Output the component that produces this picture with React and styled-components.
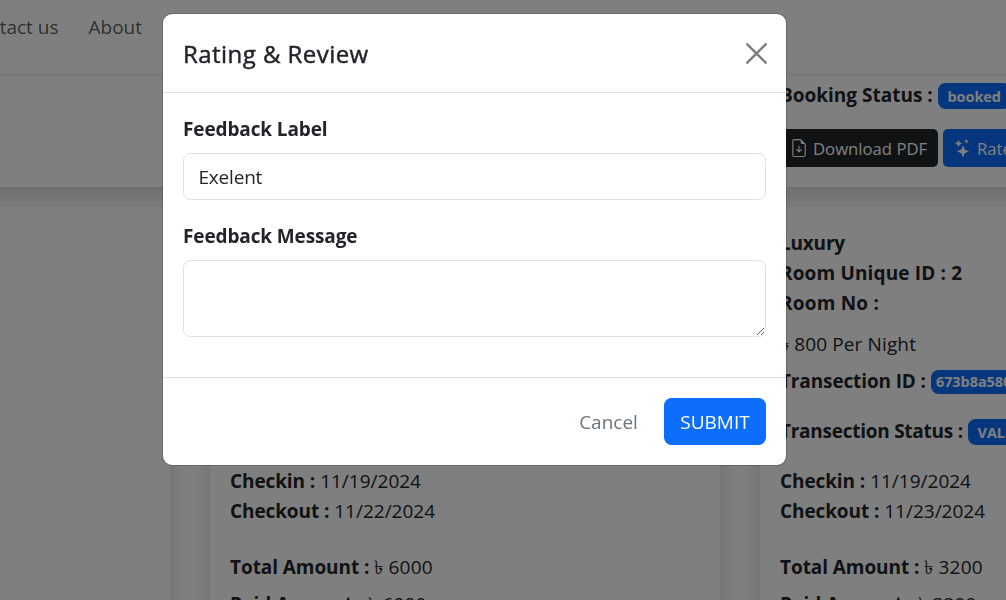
import React from 'react';
import styled, { createGlobalStyle } from 'styled-components';
import { BsStars, BsFileEarmarkArrowDown } from 'react-icons/bs';

const GlobalStyle = createGlobalStyle`
  *, *::before, *::after { box-sizing: border-box; }
  html, body, #root { height: 100%; }
  body {
    margin: 0;
    overflow: hidden;
    background: #fff;
    color: #212529;
    font-family: "Open Sans", "Noto Sans", sans-serif;
    font-size: 19px;
    line-height: 30px;
  }
`;

const Page = styled.div`
  height: 600px;
  overflow: hidden;
`;

const Navbar = styled.nav`
  position: relative;
  z-index: 1;
  height: 73px;
  margin: 0 -40px;
  padding: 12px 40px 0;
  background: #fff;
  box-shadow: 0 2.5px 5px rgba(0, 0, 0, 0.075);
`;

const NavLinks = styled.div`
  display: flex;
  justify-content: flex-end;
  gap: 30px;
  width: 142px;
  white-space: nowrap;
  color: rgba(0, 0, 0, 0.65);
`;

const NavLink = styled.span`
  flex: none;
`;

const Banner = styled.section`
  display: flex;
  flex-direction: column;
  gap: 19px;
  height: 114px;
  margin: 0 -40px;
  padding: 7px 0 0 820px;
  background: #fff;
  white-space: nowrap;
  box-shadow: 0 10px 20px rgba(0, 0, 0, 0.15);
`;

const Columns = styled.main`
  display: grid;
  grid-template-columns: repeat(3, 510px);
  gap: 40px;
  height: 500px;
  margin: 20px 0 0 -340px;
`;

const Card = styled.article`
  position: relative;
  padding: 21px 20px 0;
  background: #fff;
  white-space: nowrap;
  box-shadow: 0 10px 20px rgba(0, 0, 0, 0.15);
`;

const Line = styled.div`
  display: flex;
  align-items: center;
  height: 30px;
  margin-top: ${(p) => p.$top || 0}px;
`;

const Term = styled.span`
  margin-right: 5px;
  font-weight: 700;
  letter-spacing: ${(p) => p.$spacing || 0}px;
`;

const Value = styled.span`
  letter-spacing: ${(p) => p.$spacing || 0}px;
`;

const Badge = styled.span`
  height: ${(p) => (p.$tight ? 24 : 26)}px;
  margin-top: ${(p) => p.$top || 0}px;
  padding: 0 ${(p) => (p.$tight ? 5 : 9.75)}px;
  border-radius: 7.5px;
  background: #0d6efd;
  color: #fff;
  font-size: 14.4px;
  font-weight: 700;
  line-height: ${(p) => (p.$tight ? 24 : 27)}px;
`;

const SmallButtons = styled.div`
  display: flex;
  gap: 5px;
`;

const SmallButton = styled.button`
  display: flex;
  flex: none;
  align-items: center;
  gap: 5px;
  width: 158px;
  height: 38px;
  padding: 0 10px ${(p) => (p.$dark ? '0 10px' : '0 11px')};
  border: 0;
  border-radius: 5px;
  background: ${(p) => (p.$dark ? '#212529' : '#0d6efd')};
  color: #fff;
  font: 16.7px "Open Sans", sans-serif;
  white-space: nowrap;
  svg { flex: none; }
`;

const Backdrop = styled.div`
  position: fixed;
  inset: 0;
  z-index: 10;
  padding: 13px 0 0 162px;
  background: rgba(0, 0, 0, 0.5);
`;

const Dialog = styled.form`
  width: 625px;
  height: 453px;
  border: 1px solid rgba(0, 0, 0, 0.175);
  border-radius: 10px;
  background: #fff;
  background-clip: padding-box;
`;

const DialogHeader = styled.header`
  display: flex;
  align-items: center;
  justify-content: space-between;
  height: 79px;
  padding: 2px 16.5px 0 20px;
  border-bottom: 1px solid #dee2e6;
`;

const DialogTitle = styled.h5`
  margin: 0;
  font-size: 24px;
  font-weight: 400;
  letter-spacing: 0.45px;
  -webkit-text-stroke: 0.45px currentColor;
`;

const CloseButton = styled.button`
  display: flex;
  margin-top: -2px;
  padding: 3px;
  border: 0;
  background: none;
  color: #000;
  opacity: 0.5;
`;

const DialogBody = styled.div`
  display: flex;
  flex-direction: column;
  height: 284px;
  padding: 21px 20px 0;
`;

const Label = styled.label`
  height: 30px;
  margin: ${(p) => p.$top || 0}px 0 9px;
  font-weight: 700;
  letter-spacing: -0.12px;
`;

const Input = styled.input`
  width: 100%;
  height: 47px;
  padding: 1px 14.5px 0;
  border: 1px solid #dee2e6;
  border-radius: 7.5px;
  outline: 0;
  color: #212529;
  font: 19px "Open Sans", sans-serif;
  letter-spacing: -0.2px;
`;

const TextArea = styled.textarea`
  width: 100%;
  height: 77px;
  padding: 7.5px 15px;
  border: 1px solid #dee2e6;
  border-radius: 7.5px;
  outline: 0;
  resize: vertical;
  font: 19px/30px "Open Sans", sans-serif;
`;

const DialogFooter = styled.footer`
  display: flex;
  justify-content: flex-end;
  gap: 10px;
  padding: 20px 20px 0;
  border-top: 1px solid #dee2e6;
`;

const Button = styled.button`
  width: ${(p) => (p.$primary ? 102 : 91)}px;
  height: 47px;
  padding: 1px 0 0;
  border: 0;
  border-radius: 7.5px;
  background: ${(p) => (p.$primary ? '#0d6efd' : 'transparent')};
  color: ${(p) => (p.$primary ? '#fff' : '#6c757d')};
  font: 19px "Open Sans", sans-serif;
`;

function Stay({ top, checkout, amount }) {
  return (
    <>
      <Line $top={top}><Term $spacing={-0.1}>Checkin :</Term><Value>11/19/2024</Value></Line>
      <Line><Term $spacing={-0.1}>Checkout :</Term><Value>{checkout}</Value></Line>
      <Line $top={26}><Term $spacing={-0.07}>Total Amount :</Term><Value $spacing={0.15}>৳ {amount}</Value></Line>
      <Line $top={7}><Term>Paid Amount :</Term><Value $spacing={0.15}>৳ {amount}</Value></Line>
    </>
  );
}

export default function App() {
  return (
    <>
      <GlobalStyle />
      <Page>
        <Navbar>
          <NavLinks>
            <NavLink>Contact us</NavLink>
            <NavLink>About</NavLink>
          </NavLinks>
        </Navbar>
        <Banner>
          <Line>
            <Term>Booking Status :</Term>
            <Badge $top={2}>booked</Badge>
          </Line>
          <SmallButtons>
            <SmallButton $dark><BsFileEarmarkArrowDown size={18} />Download PDF</SmallButton>
            <SmallButton><BsStars size={18} />Rate &amp; Review</SmallButton>
          </SmallButtons>
        </Banner>
        <Columns>
          <Card />
          <Card><Stay top={238} checkout="11/22/2024" amount="6000" /></Card>
          <Card>
            <Line><Term $spacing={-0.2}>Luxury</Term></Line>
            <Line><Term $spacing={0.15}>Room Unique ID : 2</Term></Line>
            <Line><Term $spacing={0.2}>Room No :</Term></Line>
            <Line $top={11}><Value $spacing={0.13}>৳ 800 Per Night</Value></Line>
            <Line $top={7}><Term $spacing={-0.13}>Transection ID :</Term><Badge $tight $top={2}>673b8a5801f2</Badge></Line>
            <Line $top={20}><Term $spacing={-0.26}>Transection Status :</Term><Badge $top={2}>VALID</Badge></Line>
            <Stay top={20} checkout="11/23/2024" amount="3200" />
          </Card>
        </Columns>
      </Page>
      <Backdrop>
        <Dialog onSubmit={(e) => e.preventDefault()}>
          <DialogHeader>
            <DialogTitle>Rating &amp; Review</DialogTitle>
            <CloseButton type="button" aria-label="Close">
              <svg width="21" height="21" viewBox="0 0 21 21" fill="none" stroke="currentColor" strokeWidth="2.5" strokeLinecap="round">
                <path d="M1.3 1.3 19.7 19.7M19.7 1.3 1.3 19.7" />
              </svg>
            </CloseButton>
          </DialogHeader>
          <DialogBody>
            <Label htmlFor="label">Feedback Label</Label>
            <Input id="label" defaultValue="Exelent" />
            <Label $top={21} htmlFor="message">Feedback Message</Label>
            <TextArea id="message" />
          </DialogBody>
          <DialogFooter>
            <Button type="button">Cancel</Button>
            <Button $primary>SUBMIT</Button>
          </DialogFooter>
        </Dialog>
      </Backdrop>
    </>
  );
}
